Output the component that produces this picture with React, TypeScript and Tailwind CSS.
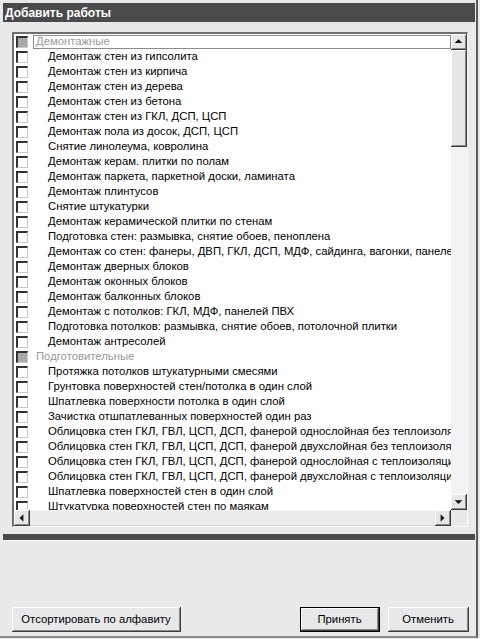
import React from "react";

type Row = { t: string; cat?: boolean };

const rows: Row[] = [
  { t: "Демонтажные", cat: true },
  { t: "Демонтаж стен из гипсолита" },
  { t: "Демонтаж стен из кирпича" },
  { t: "Демонтаж стен из дерева" },
  { t: "Демонтаж стен из бетона" },
  { t: "Демонтаж стен из ГКЛ, ДСП, ЦСП" },
  { t: "Демонтаж пола из досок, ДСП, ЦСП" },
  { t: "Снятие линолеума, ковролина" },
  { t: "Демонтаж керам. плитки по полам" },
  { t: "Демонтаж паркета, паркетной доски, ламината" },
  { t: "Демонтаж плинтусов" },
  { t: "Снятие штукатурки" },
  { t: "Демонтаж керамической плитки по стенам" },
  { t: "Подготовка стен: размывка, снятие обоев, пеноплена" },
  { t: "Демонтаж со стен: фанеры, ДВП, ГКЛ, ДСП, МДФ, сайдинга, вагонки, панелей" },
  { t: "Демонтаж дверных блоков" },
  { t: "Демонтаж оконных блоков" },
  { t: "Демонтаж балконных блоков" },
  { t: "Демонтаж с потолков: ГКЛ, МДФ, панелей ПВХ" },
  { t: "Подготовка потолков: размывка, снятие обоев, потолочной плитки" },
  { t: "Демонтаж антресолей" },
  { t: "Подготовительные", cat: true },
  { t: "Протяжка потолков штукатурными смесями" },
  { t: "Грунтовка поверхностей стен/потолка в один слой" },
  { t: "Шпатлевка поверхности потолка в один слой" },
  { t: "Зачистка отшпатлеванных поверхностей один раз" },
  { t: "Облицовка стен ГКЛ, ГВЛ, ЦСП, ДСП, фанерой однослойная без теплоизоляции" },
  { t: "Облицовка стен ГКЛ, ГВЛ, ЦСП, ДСП, фанерой двухслойная без теплоизоляции" },
  { t: "Облицовка стен ГКЛ, ГВЛ, ЦСП, ДСП, фанерой однослойная с теплоизоляцией" },
  { t: "Облицовка стен ГКЛ, ГВЛ, ЦСП, ДСП, фанерой двухслойная с теплоизоляцией" },
  { t: "Шпатлевка поверхностей стен в один слой" },
  { t: "Штукатурка поверхностей стен по маякам" },
];

function Check({ gray }: { gray?: boolean }) {
  return (
    <div
      className={
        "w-[12px] h-[12px] shrink-0 border-t-2 border-l-2 border-r border-b border-t-[#333335] border-l-[#333335] border-r-[#c8c8c8] border-b-[#c8c8c8] " +
        (gray ? "bg-[#a9a9ab]" : "bg-white")
      }
    />
  );
}

function Arrow({ dir }: { dir: "up" | "down" | "left" | "right" }) {
  const pts =
    dir === "up"
      ? "4,9 12,9 8,5"
      : dir === "down"
      ? "4,6 12,6 8,10"
      : dir === "left"
      ? "10,4 10,12 6,8"
      : "6,4 6,12 10,8";
  return (
    <svg width="16" height="16" viewBox="0 0 16 16" className="block">
      <polygon points={pts} fill="#111" />
    </svg>
  );
}

function SBtn({ dir }: { dir: "up" | "down" | "left" | "right" }) {
  return (
    <div className="w-[16px] h-[16px] shrink-0 bg-[#e6e6e8] border-r border-b border-r-[#3c3c3c] border-b-[#3c3c3c] shadow-[inset_1px_1px_0_#ffffff,inset_-1px_-1px_0_#8a8a8a] flex items-center justify-center">
      <Arrow dir={dir} />
    </div>
  );
}

function Btn({ children, w, def }: { children: React.ReactNode; w: string; def?: boolean }) {
  return (
    <div className={(def ? "border border-black " : "") + w + " h-[25px]"}>
      <div className="w-full h-full bg-[#e8e8ea] border-r border-b border-r-[#3c3c3c] border-b-[#3c3c3c] shadow-[inset_1px_1px_0_#ffffff,inset_-1px_-1px_0_#8a8a8a] flex items-center justify-center text-[11.3px]">
        {children}
      </div>
    </div>
  );
}

export default function App() {
  return (
    <div className="w-[480px] h-[639px] bg-[#e9e9eb] pr-[2px] pb-[1px] font-['Liberation_Sans',Arial,sans-serif] text-[11.3px] text-black overflow-hidden">
      <div className="h-full flex flex-col border-r-2 border-b-2 border-r-[#5a5a5c] border-b-[#8a8a8c] pl-[3px] pt-[3px] pr-[1px]">
        <div className="h-[19px] shrink-0 bg-[#4a4a4c] text-white font-bold text-[12px] pl-[2px] flex items-center">
          Добавить работы
        </div>
        <div className="mt-[10px] ml-[9px] mr-[7px] h-[495px] shrink-0 border-t-2 border-l-2 border-r border-b border-t-[#6e6e70] border-l-[#6e6e70] border-r-[#fafafa] border-b-[#fafafa] flex flex-col">
          <div className="flex flex-1 min-h-0">
            <div className="flex-1 min-w-0 overflow-hidden bg-white">
              {rows.map((r, i) => (
                <div key={i} className="h-[15px] flex items-center pl-[2px] whitespace-nowrap">
                  <Check gray={r.cat} />
                  {r.cat ? (
                    i === 0 ? (
                      <div className="ml-[5px] flex-1 h-[14px] border border-[#8c8c8c] pl-[2px] flex items-center text-[#9a9a9c]">
                        {r.t}
                      </div>
                    ) : (
                      <div className="ml-[6px] pl-[2px] text-[#9a9a9c]">{r.t}</div>
                    )
                  ) : (
                    <div className="ml-[20px]">{r.t}</div>
                  )}
                </div>
              ))}
            </div>
            <div className="w-[16px] shrink-0 flex flex-col bg-[#f3f3f5]">
              <SBtn dir="up" />
              <div className="h-[97px] bg-[#e6e6e8] border-r border-b border-r-[#3c3c3c] border-b-[#3c3c3c] shadow-[inset_1px_1px_0_#ffffff,inset_-1px_-1px_0_#8a8a8a]" />
              <div className="flex-1" />
              <SBtn dir="down" />
            </div>
          </div>
          <div className="h-[16px] shrink-0 flex">
            <SBtn dir="left" />
            <div className="flex-1 bg-[#ebebed] border-t border-t-[#f8f8f8] border-b border-b-[#d6d6d8]" />
            <SBtn dir="right" />
            <div className="w-[16px] bg-[#e9e9eb]" />
          </div>
        </div>
        <div className="mt-[7px] h-[6px] shrink-0 bg-[#4a4a4c]" />
        <div className="h-[1px] shrink-0 bg-[#fafafa]" />
        <div className="flex-1 flex items-end pb-[4px] pl-[9px] pr-[6px]">
          <Btn w="w-[169px]">Отсортировать по алфавиту</Btn>
          <div className="flex-1" />
          <Btn w="w-[80px]" def>
            Принять
          </Btn>
          <div className="w-[8px]" />
          <Btn w="w-[81px]">Отменить</Btn>
        </div>
      </div>
    </div>
  );
}
